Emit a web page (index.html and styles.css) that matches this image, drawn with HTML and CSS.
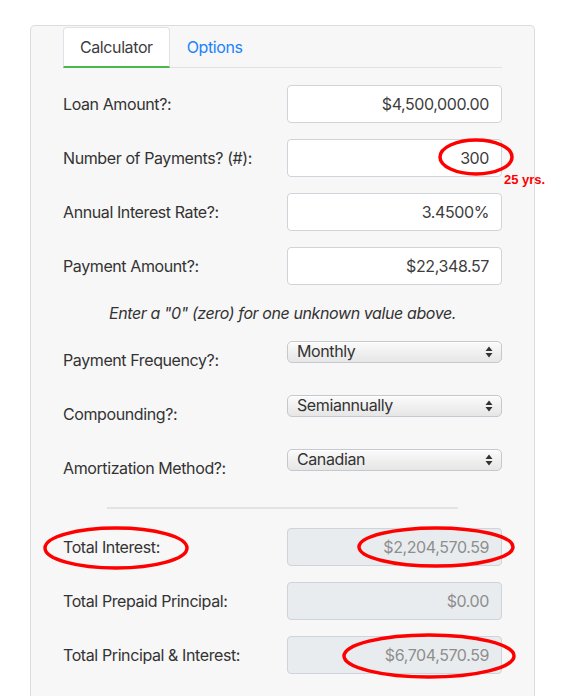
FILE: index.html
```html
<!DOCTYPE html>
<html lang="en">
<head>
<meta charset="utf-8">
<title>Calculator</title>
<link rel="stylesheet" href="styles.css">
</head>
<body>
<div class="page">
  <div class="card">
    <div class="tabs">
      <div class="tab active">Calculator</div>
      <div class="tab link">Options</div>
    </div>
    <div class="content">
      <div class="row"><label class="lbl">Loan Amount?:</label><div class="input">$4,500,000.00</div></div>
      <div class="row"><label class="lbl">Number of Payments? (#):</label><div class="input">300</div></div>
      <div class="row"><label class="lbl">Annual Interest Rate?:</label><div class="input">3.4500%</div></div>
      <div class="row"><label class="lbl">Payment Amount?:</label><div class="input">$22,348.57</div></div>
      <p class="note">Enter a "0" (zero) for one unknown value above.</p>
      <div class="row"><label class="lbl">Payment Frequency?:</label><div class="select"><span>Monthly</span><svg class="arrows" width="8" height="12" viewBox="0 0 8 12"><path d="M4 0.5 L7.5 5 L0.5 5 Z M4 11.5 L7.5 7 L0.5 7 Z" fill="#333"/></svg></div></div>
      <div class="row"><label class="lbl">Compounding?:</label><div class="select"><span>Semiannually</span><svg class="arrows" width="8" height="12" viewBox="0 0 8 12"><path d="M4 0.5 L7.5 5 L0.5 5 Z M4 11.5 L7.5 7 L0.5 7 Z" fill="#333"/></svg></div></div>
      <div class="row"><label class="lbl">Amortization Method?:</label><div class="select"><span>Canadian</span><svg class="arrows" width="8" height="12" viewBox="0 0 8 12"><path d="M4 0.5 L7.5 5 L0.5 5 Z M4 11.5 L7.5 7 L0.5 7 Z" fill="#333"/></svg></div></div>
      <div class="divider"></div>
      <div class="row"><label class="lbl">Total Interest:</label><div class="input disabled">$2,204,570.59</div></div>
      <div class="row"><label class="lbl">Total Prepaid Principal:</label><div class="input disabled">$0.00</div></div>
      <div class="row"><label class="lbl">Total Principal &amp; Interest:</label><div class="input disabled">$6,704,570.59</div></div>
    </div>
  </div>
  <svg class="marks" width="585" height="696" viewBox="0 0 585 696">
    <g fill="none" stroke="#f00" stroke-width="3.5">
      <ellipse cx="476" cy="157" rx="36" ry="17"/>
      <ellipse cx="116" cy="548" rx="71" ry="20"/>
      <ellipse cx="436" cy="547" rx="77" ry="19"/>
      <ellipse cx="429" cy="656" rx="85" ry="21"/>
    </g>
  </svg>
  <div class="yrs">25 yrs.</div>
</div>
</body>
</html>
```
FILE: styles.css
```css
html, body {
  margin: 0;
  padding: 0;
  background: #fff;
}
body {
  font-family: Inter, "Liberation Sans", sans-serif;
  font-size: 16px;
  letter-spacing: -0.4px;
  color: #212529;
  overflow: hidden;
}
.page {
  position: relative;
  width: 585px;
  height: 696px;
  padding-top: 25px;
  box-sizing: border-box;
  overflow: hidden;
}
.card {
  margin-left: 30px;
  width: 505px;
  box-sizing: border-box;
  background: #f7f7f7;
  border: 1px solid #dcdcdc;
  border-bottom: none;
  border-radius: 5px 5px 0 0;
  padding: 1px 32px 6px;
}
.tabs {
  display: flex;
  border-bottom: 1px solid #dee2e6;
}
.tab {
  padding: 7px 16px 7px;
  line-height: 24px;
  border: 1px solid transparent;
  border-bottom: 2px solid transparent;
  margin-bottom: -1px;
  border-radius: 4px 4px 0 0;
}
.tab.active {
  background: #fff;
  color: #3d3d3d;
  border-color: #dee2e6 #dee2e6 #4cb84c;
}
.tab.link {
  color: #1a82ff;
}
.content {
  padding-top: 17px;
}
.row {
  display: grid;
  grid-template-columns: 224px 215px;
  align-items: start;
  margin-bottom: 16px;
  min-height: 38px;
}
.lbl {
  padding-top: 7px;
  line-height: 24px;
  color: #333;
}
.input {
  height: 38px;
  box-sizing: border-box;
  border: 1px solid #ced4da;
  border-radius: 4px;
  background: #fff;
  text-align: right;
  padding: 6px 12px;
  line-height: 24px;
  color: #3d3d3d;
}
.input.disabled {
  background: #e9ecef;
  color: #8e8e8e;
}
.note {
  margin: 16px 0 16px;
  text-align: center;
  font-style: italic;
  line-height: 24px;
  color: #333;
}
.select {
  height: 22px;
  box-sizing: border-box;
  border: 1px solid #c4c8cf;
  border-radius: 5px;
  background: linear-gradient(#fbfbfb, #f0f0f0 50%, #e6e6e6);
  box-shadow: inset 0 1px 0 #fff;
  display: flex;
  align-items: center;
  justify-content: space-between;
  padding: 0 8px 0 9px;
  line-height: 19px;
  color: #333;
}
.select span {
  margin-top: -2px;
}
.arrows {
  display: block;
}
.divider {
  width: 80%;
  height: 2px;
  background: #e3e3e3;
  margin: 20px auto 19px;
}
.marks {
  position: absolute;
  left: 0;
  top: 0;
  pointer-events: none;
}
.yrs {
  position: absolute;
  left: 504px;
  top: 172px;
  color: #f00;
  font-family: "Liberation Sans", Arial, sans-serif;
  font-weight: bold;
  font-size: 13px;
  line-height: 16px;
  letter-spacing: 0;
}
```
